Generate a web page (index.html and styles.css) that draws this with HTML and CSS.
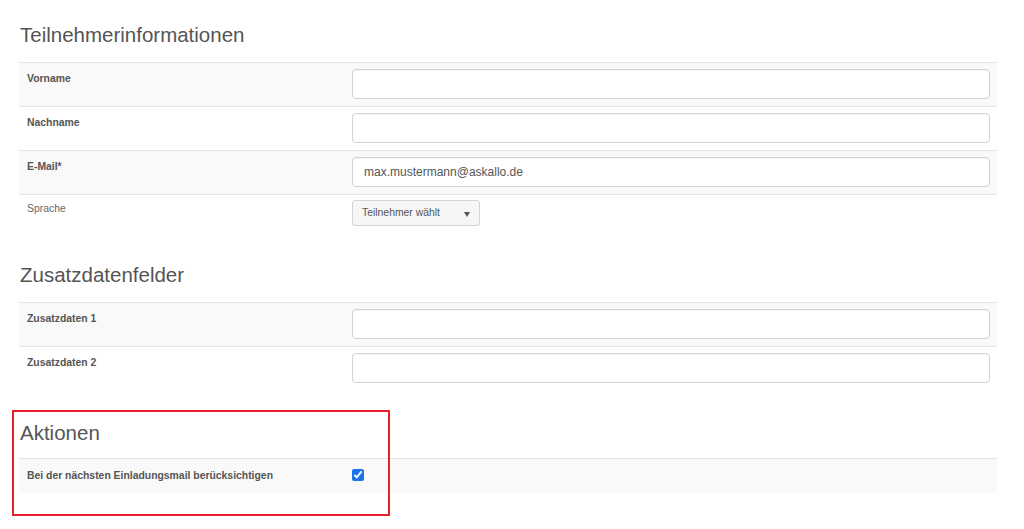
FILE: index.html
```html
<!DOCTYPE html>
<html lang="de">
<head>
<meta charset="utf-8">
<title>Teilnehmer</title>
<link rel="stylesheet" href="styles.css">
</head>
<body>
<div class="page">
  <section class="group">
    <h2 class="title">Teilnehmerinformationen</h2>
    <div class="rows">
      <div class="row odd"><div class="label">Vorname</div><div class="field"><input class="text" type="text"></div></div>
      <div class="row"><div class="label">Nachname</div><div class="field"><input class="text" type="text"></div></div>
      <div class="row odd"><div class="label">E-Mail*</div><div class="field"><input class="text" type="text" value="max.mustermann@askallo.de"></div></div>
      <div class="row row-select"><div class="label plain">Sprache</div><div class="field"><div class="select"><span>Teilnehmer wählt</span><span class="caret"></span></div></div></div>
    </div>
  </section>
  <section class="group">
    <h2 class="title">Zusatzdatenfelder</h2>
    <div class="rows">
      <div class="row odd"><div class="label">Zusatzdaten 1</div><div class="field"><input class="text" type="text"></div></div>
      <div class="row"><div class="label">Zusatzdaten 2</div><div class="field"><input class="text" type="text"></div></div>
    </div>
  </section>
  <section class="group highlighted">
    <div class="highlight"></div>
    <h2 class="title title-tight">Aktionen</h2>
    <div class="rows">
      <div class="row odd row-check"><div class="label">Bei der nächsten Einladungsmail berücksichtigen</div><div class="field"><input class="check" type="checkbox" checked></div></div>
    </div>
  </section>
</div>
</body>
</html>
```
FILE: styles.css
```css
* { box-sizing: border-box; }
html, body { margin: 0; padding: 0; background: #fff; }
body { font-family: "Liberation Sans", Arial, sans-serif; color: #555; }
.page { width: 1024px; padding: 24px 27px 0 19px; }
.group { margin-bottom: 30px; }
.title { margin: 0 0 16px; font-size: 20.5px; line-height: 22px; font-weight: normal; color: #555; padding-left: 1px; }
.title-tight { margin-bottom: 14px; }
.rows { width: 978px; }
.row { display: flex; border-top: 1px solid #e3e3e3; padding: 6px 7px 7px 8px; }
.row.odd { background: #f9f9f9; }
.label { width: 325px; flex: none; font-size: 10.4px; line-height: 15px; font-weight: bold; color: #555; padding-top: 2px; }
.label.plain { font-weight: normal; color: #666; padding-top: 1px; }
.field { flex: 1; }
.text { display: block; width: 100%; height: 30px; border: 1px solid #d2d2d2; border-radius: 4px; background: #fff; padding: 0 11px; font-family: "Liberation Sans", Arial, sans-serif; font-size: 12px; color: #555; box-shadow: inset 0 1px 1px rgba(0,0,0,0.04); outline: none; }
.row-select { padding-top: 5px; padding-bottom: 8px; }
.select { position: relative; width: 128px; height: 26px; border: 1px solid #d4d4d4; border-radius: 3px; background: #f6f6f6; font-size: 10.4px; line-height: 24px; padding-left: 9px; color: #555; }
.caret { position: absolute; right: 9px; top: 11px; width: 0; height: 0; border-left: 3.5px solid transparent; border-right: 3.5px solid transparent; border-top: 5px solid #555; }
.highlighted { position: relative; margin-top: 32px; }
.highlight { position: absolute; left: -7px; top: -12px; width: 378px; height: 106px; border: 2px solid #e8202a; pointer-events: none; }
.row-check { padding-top: 8px; padding-bottom: 8px; }
.row-check .label { padding-top: 1px; line-height: 16px; }
.check { margin: 2px 0 0 0; width: 12px; height: 12px; accent-color: #1a73e8; }
```
